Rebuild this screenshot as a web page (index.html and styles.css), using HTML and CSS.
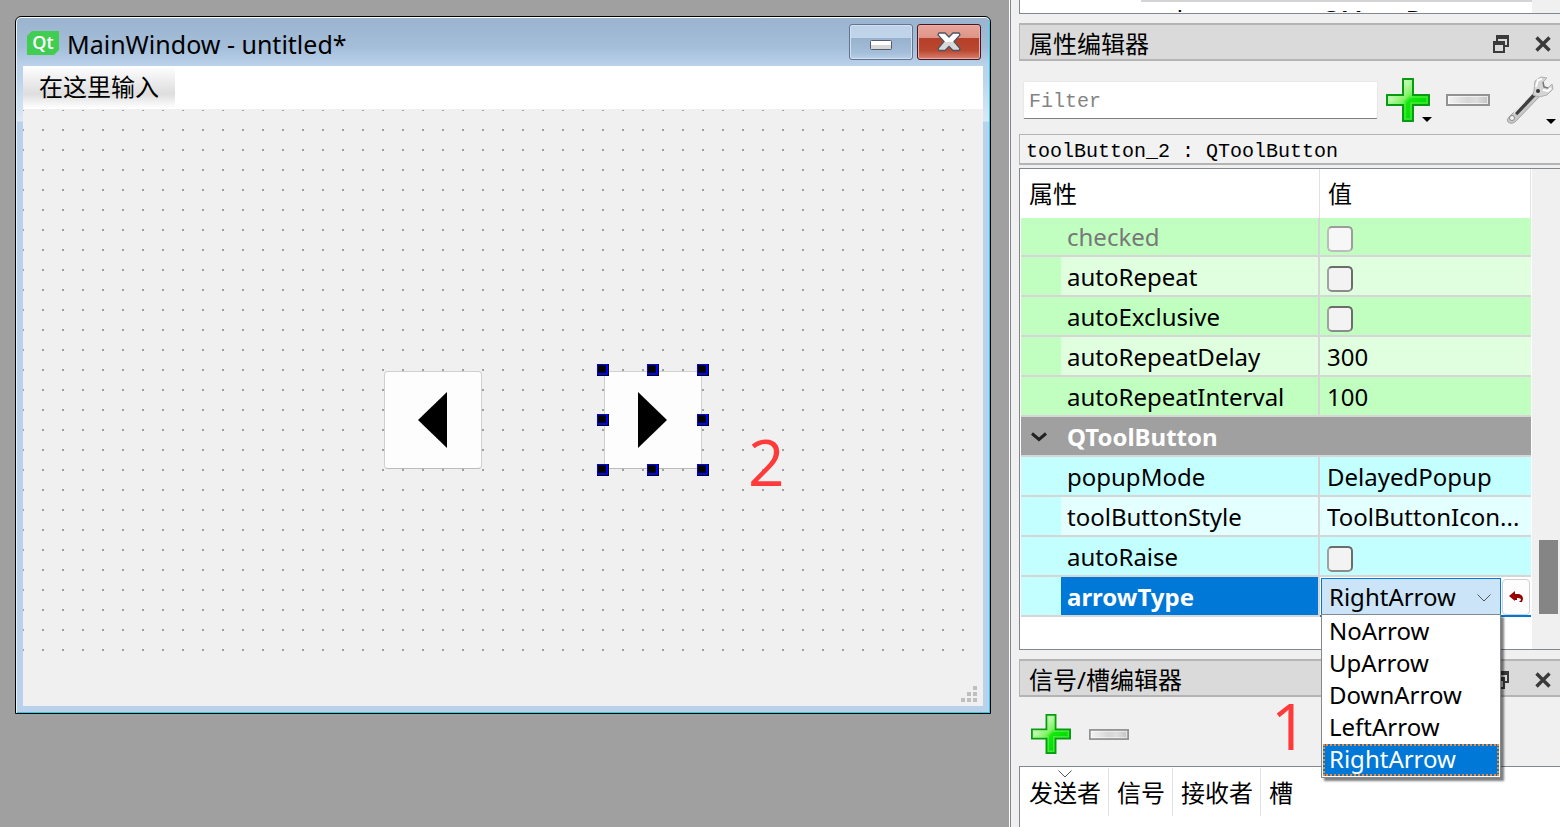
FILE: index.html
```html
<!DOCTYPE html>
<html lang="zh-CN">
<head>
<meta charset="utf-8">
<title>Qt Designer</title>
<link rel="stylesheet" href="styles.css">
</head>
<body>
<svg class="defs" aria-hidden="true">
  <defs>
    <linearGradient id="green" x1="0" y1="0" x2="1" y2="1">
      <stop offset="0.2" stop-color="#e6fbd8"/><stop offset="0.45" stop-color="#7df25e"/><stop offset="0.52" stop-color="#14e80c"/><stop offset="0.75" stop-color="#00dc00"/><stop offset="1" stop-color="#00a800"/>
    </linearGradient>
    <linearGradient id="silver" x1="0" y1="0" x2="1" y2="0">
      <stop offset="0" stop-color="#f4f4f4"/><stop offset="0.5" stop-color="#d6d6d6"/><stop offset="0.7" stop-color="#dedede"/><stop offset="1" stop-color="#c2c2c2"/>
    </linearGradient>
    <linearGradient id="cross" x1="0" y1="0" x2="0" y2="1">
      <stop offset="0.5" stop-color="#fff"/><stop offset="0.5" stop-color="#d8d8d8"/>
    </linearGradient>
    <symbol id="plus" viewBox="0 0 44 44">
      <path d="M17 1h10v16h16v10H27v16H17V27H1V17h16z" fill="url(#green)" stroke="#079c10" stroke-width="2"/>
      <path d="M19 3h6v16h16v6H25v16h-6V25H3v-6h16z" fill="none" stroke="#8ff383" stroke-opacity=".45" stroke-width="1.500"/>
    </symbol>
    <symbol id="minus" viewBox="0 0 44 12">
      <rect x="1" y="1" width="42" height="10" fill="url(#silver)" stroke="#929292" stroke-width="2"/>
      <rect x="2.500" y="2.500" width="39" height="7" fill="none" stroke="#fff" stroke-opacity=".6"/>
    </symbol>
    <symbol id="float" viewBox="0 0 16 18">
      <path d="M3 0h13v12h-4v-2h2V4H5v2H3z" fill="#3a3a3a"/>
      <path d="M0 6h12v12H0zm2 4v6h8v-6z" fill="#3a3a3a" fill-rule="evenodd"/>
    </symbol>
    <symbol id="close" viewBox="0 0 16 16">
      <path d="M1.500 1.500l13 13M14.500 1.500l-13 13" stroke="#3a3a3a" stroke-width="3.400"/>
    </symbol>
  </defs>
</svg>
<div class="app">
  <main class="workspace">
    <section class="form-window">
      <header class="title-bar">
        <svg class="qt-logo" viewBox="0 0 32 24"><path d="M5 0h27v19l-5 5H0V5z" fill="#41cd52"/><text x="16" y="18" text-anchor="middle" class="qt-text">Qt</text></svg>
        <h1 class="window-title">MainWindow - untitled*</h1>
        <button class="win-button" aria-label="最小化"><svg width="22" height="10"><rect x=".5" y=".5" width="21" height="9" rx="1" fill="url(#cross)" stroke="#555d6c"/></svg></button>
        <button class="win-button win-close" aria-label="关闭"><svg width="24" height="20" viewBox="0 0 24 20"><path d="M2 1h6l4 4 4-4h6l1 2-6 6.500 6 7-1 2h-6l-4-4-4 4H2l-1-2 6-7L1 3z" fill="url(#cross)" stroke="#4e5463" stroke-width="1.300"/></svg></button>
      </header>
      <div class="client">
        <nav class="menu-bar"><button class="menu-item">在这里输入</button></nav>
        <div class="canvas">
          <button class="tool left-tool" aria-label="LeftArrow"><svg width="29" height="56"><path d="M29 0v56L0 28z"/></svg></button>
          <button class="tool right-tool" aria-label="RightArrow"><svg width="29" height="56"><path d="M0 0v56l29-28z"/></svg></button>
          <div class="handles">
            <i class="handle"></i><i class="handle"></i><i class="handle"></i>
            <i class="handle"></i><i></i><i class="handle"></i>
            <i class="handle"></i><i class="handle"></i><i class="handle"></i>
          </div>
          <span class="mark mark-two">2</span>
        </div>
        <footer class="status-bar"><svg width="16" height="16" fill="#bfbfbf"><path d="M12 0h4v4h-4zM6 6h4v4H6zM12 6h4v4h-4zM0 12h4v4H0zM6 12h4v4H6zM12 12h4v4h-4z"/></svg></footer>
      </div>
    </section>
  </main>
  <aside class="docks">
    <div class="inspector"><div class="inspector-view"><span class="object-name">menubar</span><span class="object-class">QMenuBar</span></div></div>
    <section class="dock">
      <header class="dock-title"><h2 class="dock-name">属性编辑器</h2>
        <button class="icon-button" aria-label="浮动"><svg width="16" height="18"><use href="#float"/></svg></button>
        <button class="icon-button" aria-label="关闭"><svg width="16" height="16"><use href="#close"/></svg></button>
      </header>
      <div class="filter-row">
        <input class="filter" type="text" placeholder="Filter" aria-label="Filter">
        <button class="icon-button menu-button" aria-label="添加"><svg width="44" height="44"><use href="#plus"/></svg></button>
        <button class="icon-button" aria-label="删除"><svg width="44" height="12"><use href="#minus"/></svg></button>
        <button class="icon-button menu-button wrench" aria-label="配置">
          <svg width="48" height="48" viewBox="0 0 48 48">
            <path d="M3 41L28 16l5 5L10 45q-4 4-8 1-2-2 1-5z" fill="#c9c9c9" stroke="#a4a4a4"/>
            <path d="M10 38L30 17" stroke="#404040" stroke-width="3.500"/>
            <path d="M8 37L28 15" stroke="#efefef" stroke-width="1.500"/>
            <circle cx="6" cy="42" r="2.500" fill="#f5f5f5" stroke="#888"/>
            <path d="M28 14l1-9 6-4 6 1-4 4 1 5 4 1 4-4 1 5-6 6-8 2-6-2z" fill="#d4d4d4" stroke="#b0b0b0"/>
            <path d="M30 11l2-7 4-1M37 14l5 1 3-3" stroke="#fff" stroke-width="2" fill="none"/>
            <path d="M37 6l1 5 4 1" stroke="#777" stroke-width="1.500" fill="none"/>
            <circle cx="32" cy="15" r="2" fill="#333"/>
          </svg>
        </button>
      </div>
      <div class="object-label">toolButton_2 : QToolButton</div>
      <div class="property-view">
        <table class="properties">
          <colgroup><col class="col-indent"><col class="col-name"><col></colgroup>
          <thead><tr><th colspan="2">属性</th><th>值</th></tr></thead>
          <tbody class="green">
            <tr class="disabled"><td></td><td><label for="p1">checked</label></td><td><input id="p1" type="checkbox" class="check" disabled></td></tr>
            <tr class="light"><td></td><td><label for="p2">autoRepeat</label></td><td><input id="p2" type="checkbox" class="check"></td></tr>
            <tr><td></td><td><label for="p3">autoExclusive</label></td><td><input id="p3" type="checkbox" class="check"></td></tr>
            <tr class="light"><td></td><td>autoRepeatDelay</td><td>300</td></tr>
            <tr><td></td><td>autoRepeatInterval</td><td>100</td></tr>
          </tbody>
          <tbody class="group"><tr><td><svg class="chevron" width="16" height="10"><path d="M1 1.500l7 6 7-6" fill="none" stroke="#222" stroke-width="3"/></svg></td><td colspan="2">QToolButton</td></tr></tbody>
          <tbody class="cyan">
            <tr><td></td><td>popupMode</td><td>DelayedPopup</td></tr>
            <tr class="light"><td></td><td>toolButtonStyle</td><td>ToolButtonIcon...</td></tr>
            <tr><td></td><td><label for="p4">autoRaise</label></td><td><input id="p4" type="checkbox" class="check"></td></tr>
            <tr class="selected"><td></td><td><label for="arrow">arrowType</label></td><td>
              <div class="editor">
                <div class="combo">
                  <select id="arrow" class="combo-box"><option>NoArrow</option><option>UpArrow</option><option>DownArrow</option><option>LeftArrow</option><option selected>RightArrow</option></select>
                  <svg class="combo-arrow" width="14" height="8"><path d="M.5.5L7 7 13.500.5" fill="none" stroke="#555"/></svg>
                  <ul class="popup" role="listbox" aria-label="arrowType">
                    <li class="choice" role="option">NoArrow</li><li class="choice" role="option">UpArrow</li><li class="choice" role="option">DownArrow</li><li class="choice" role="option">LeftArrow</li><li class="choice current" role="option" aria-selected="true">RightArrow</li>
                  </ul>
                </div>
                <button class="reset" aria-label="重置"><svg width="14" height="12"><path d="M0 5l6-5v3h4q4 1 4 5l-1 3h-3l2-2q0-2-3-2H8v2H6v1z" fill="#900"/></svg></button>
              </div>
            </td></tr>
          </tbody>
        </table>
        <div class="scrollbar"><div class="thumb"></div></div>
      </div>
    </section>
    <section class="dock signals">
      <header class="dock-title"><h2 class="dock-name">信号/槽编辑器</h2>
        <button class="icon-button" aria-label="浮动"><svg width="16" height="18"><use href="#float"/></svg></button>
        <button class="icon-button" aria-label="关闭"><svg width="16" height="16"><use href="#close"/></svg></button>
      </header>
      <div class="signal-tools">
        <button class="icon-button" aria-label="添加"><svg width="40" height="40"><use href="#plus"/></svg></button>
        <button class="icon-button" aria-label="删除"><svg width="40" height="11"><use href="#minus"/></svg></button>
        <span class="mark mark-one">1</span>
      </div>
      <div class="signal-view">
        <table class="signal-table"><thead><tr><th>发送者<svg class="sort" width="14" height="8"><path d="M.5.5L7 7 13.500.5" fill="none" stroke="#555"/></svg></th><th>信号</th><th>接收者</th><th>槽</th></tr></thead></table>
      </div>
    </section>
  </aside>
</div>
</body>
</html>
```
FILE: styles.css
```css
* { box-sizing: border-box; }
body { margin: 0; background: #a0a0a0; color: #000; font: 24px/32px "Noto Sans", "Noto Sans CJK SC", sans-serif; }
button, input, select { font: inherit; color: inherit; margin: 0; }
button { border: 0; padding: 0; background: none; }
svg { display: block; flex: none; }
h1, h2, ul { margin: 0; padding: 0; font: inherit; list-style: none; }
.defs { position: absolute; width: 0; height: 0; }
.app { display: grid; grid-template-columns: minmax(0, 1fr) 551px; height: 100vh; overflow: hidden; }

.workspace { padding: 16px 18px 16px 15px; }
.form-window {
  border: 1px solid #000; border-radius: 6px 6px 0 0; padding: 0 7px 7px;
  background: linear-gradient(#9ab4d0, #a4bdd9 30px, #b9d1ea 48px, #bcd3eb 60px, #dce8f5 104px, #b9d1ea 105px);
  box-shadow: inset 0 1px #fff, inset 1px 0 #e8f4fc, inset -1px -1px #22d0e8;
}
.title-bar { display: flex; align-items: center; gap: 4px; height: 49px; padding: 3px 2px 0 4px; }
.qt-logo { width: 32px; height: 24px; }
.qt-text { font: 600 18px "Open Sans", sans-serif; fill: #fff; }
.window-title { flex: 1; padding: 1px 0 0 4px; font-size: 25px; }
.win-button {
  display: flex; justify-content: center; align-items: center; width: 64px; height: 36px; padding-top: 6px; margin-bottom: 3px;
  border: 1px solid #62748f; border-radius: 3px;
  background: linear-gradient(#bdd1e7, #c0d4ea 38%, #98b1cd 38%, #a4bdd8 80%, #b8d0e9); box-shadow: inset 0 0 0 1px #d3e2f2;
}
.win-close { padding: 0; border-color: #4a1420; background: linear-gradient(#e7a69b, #de9488 38%, #b53f28 38%, #bb4830 75%, #d8806e); box-shadow: inset 0 0 0 1px #e9b0a6; }
.client { background: #f0f0f0; }
.menu-bar { height: 43px; background: #fff; }
.menu-item { height: 43px; padding: 0 16px 2px; background: linear-gradient(#fff, #f0f0f0 12px, #dedede 28px, #fff 42px); }
.canvas {
  position: relative; height: 553px; margin-right: 1px; border-top: 1px solid #f0f0f0;
  background: conic-gradient(from 270deg at 2px 2px, #a0a0a0 25%, transparent 0) -1px -1px / 20px 20px;
  background-clip: padding-box;
}
.tool { position: absolute; top: 261px; width: 98px; height: 98px; padding: 0 0 1px 33px; border: 1px solid #d0d0d0; border-bottom-color: #bcbcbc; border-radius: 4px; background: #fdfdfd; }
.left-tool { left: 361px; }
.right-tool { left: 581px; }
.handles { position: absolute; left: 574px; top: 254px; display: grid; grid-template-columns: repeat(3, 12px); gap: 38px; }
.handles i { height: 12px; }
.handle { border: solid #000; border-width: 0 1px 1px 0; background: #000; box-shadow: inset 1px 1px #00f, inset -2px -2px #00f; }
.mark { font: 500 64px/64px "Open Sans", sans-serif; color: #ff3a3a; }
.mark-two { position: absolute; left: 725px; top: 320px; }
.status-bar { display: flex; justify-content: flex-end; align-items: flex-end; height: 44px; padding: 0 6px 4px 0; }

.docks { display: flex; flex-direction: column; min-height: 0; padding-left: 9px; border-left: 1px solid #fff; background: linear-gradient(90deg, #828790 1px, #f0f0f0 1px); }
.inspector { height: 14px; border: 1px solid #828790; border-width: 0 0 1px 1px; padding-right: 28px; background: linear-gradient(#f0f0f0, #f0f0f0) right / 28px 100% no-repeat #fff; }
.inspector-view { display: grid; grid-template-columns: 211px 1fr; height: 12px; overflow: hidden; padding-left: 91px; background: linear-gradient(#d4d4d4, #d4d4d4) 121px 0 / 100% 2px no-repeat; }
.inspector-view span { padding-top: 3px; }
.dock { flex: none; padding-top: 9px; }
.dock-title { display: flex; align-items: center; gap: 26px; height: 38px; padding: 3px 9px 0; border: 2px solid #b4b4b4; border-width: 2px 0 2px 1px; background: #dadada; }
.dock-name { flex: 1; }
.icon-button { display: flex; flex: none; align-items: center; }
.filter-row { display: flex; align-items: center; gap: 16px; height: 73px; padding: 4px 6px 0 4px; }
.filter { flex: 1; min-width: 0; height: 38px; margin-right: -8px; padding: 4px 5px 0; border: 1px solid #e8e8e8; border-bottom-color: #808080; border-radius: 2px; background: #fff; font: 20px "Liberation Mono", monospace; }
.filter::placeholder { color: #848484; opacity: 1; }
.menu-button { position: relative; }
.menu-button::after { content: ""; position: absolute; right: -2px; bottom: 0; border: 5px solid transparent; border-top-color: #000; border-bottom: 0; }
.object-label { height: 31px; padding: 3px 6px 0; border: 1px solid #b4b4b4; border-width: 1px 0 2px 1px; background: #f2f2f2; font: 20px/28px "Liberation Mono", monospace; }
.property-view { display: flex; align-items: flex-start; margin-top: 3px; height: 482px; border: 1px solid #828790; border-width: 1px 0 1px 1px; background: #fff; }
.properties { flex: 1; min-width: 0; margin-left: 1px; border-spacing: 0; table-layout: fixed; }
.col-indent { width: 40px; }
.col-name { width: 259px; }
th { font-weight: 400; text-align: left; }
.properties th { height: 49px; padding: 0 0 0 8px; border-right: 1px solid #e2e2e2; }
.properties td { height: 40px; padding: 2px 0 0 6px; border-bottom: 2px solid #d6d6d6; white-space: nowrap; }
.properties td:last-child { padding-left: 7px; }
.properties .disabled td { height: 39px; padding-top: 1px; color: #787878; }
td:nth-child(2) { border-right: 2px solid #d6d6d6; }
.green td { background: #c0ffc0; }
.green .light td + td { background: #dfffdf; }
.cyan td { background: #c4ffff; }
.cyan .light td + td { background: #e4ffff; }
.group td { background: #a0a0a0; color: #fff; font-weight: 700; }
.properties .group td:last-child { padding-left: 6px; border-right: 0; }
.chevron { margin-left: 4px; }
.check { appearance: none; display: block; width: 26px; height: 26px; margin-top: 3px; border: 2px solid #6c6c6c; border-left-color: #a0a0a0; border-bottom-color: #8c8c8c; border-radius: 5px; background: #f3f3f3; }
.check:disabled { border-color: #9c9c9c #9c9c9c #bcbcbc #bcbcbc; background: #f7f7f7; }
.cyan .selected td:nth-child(2) { background: #0078d7; color: #fff; font-weight: 700; }
.cyan .selected td:last-child { padding: 0 0 0 1px; background: #fff; border-bottom-color: #0078d7; }
.editor { display: flex; align-items: center; gap: 1px; height: 38px; padding-top: 1px; }
.combo { position: relative; flex: 1; height: 37px; }
.combo-box { appearance: none; width: 100%; height: 37px; padding: 0 7px; border: 1px solid #0078d7; border-bottom-color: #828790; background: #cce4f7; }
.combo-arrow { position: absolute; right: 10px; top: 16px; }
.reset { display: flex; justify-content: center; align-items: center; width: 28px; height: 36px; margin-right: 1px; border: 1px solid #d0d0d0; border-radius: 4px; background: #fdfdfd; }
.popup { position: absolute; left: 0; right: 0; top: 36px; z-index: 2; padding: 1px; border: 1px solid #828790; background: #fff; box-shadow: 3px 3px 2px #00000080; }
.choice { height: 32px; padding: 0 6px; line-height: 29px; }
.current { background: #0078d7; color: #fff; outline: 2px dotted #ff8728; outline-offset: -2px; }
.scrollbar { align-self: stretch; width: 28px; margin-left: 1px; padding: 371px 2px 0 7px; background: #f0f0f0; }
.thumb { height: 74px; background: #858585; }

.signals { display: flex; flex: 1; flex-direction: column; }
.signal-tools { display: flex; align-items: center; gap: 18px; height: 69px; padding: 5px 0 0 12px; }
.mark-one { margin-left: 124px; margin-top: -16px; }
.signal-view { flex: 1; border: 1px solid #828790; border-width: 1px 0 0 1px; background: #fff; }
.signal-table { border-spacing: 0; margin-top: 1px; }
.signal-table th { position: relative; height: 48px; padding: 2px 7px 0 8px; border-right: 1px solid #e2e2e2; }
.signal-table th:first-child { padding-left: 9px; }
.signal-table th:last-child { border: 0; }
.sort { position: absolute; left: 38px; top: 2px; }
```
